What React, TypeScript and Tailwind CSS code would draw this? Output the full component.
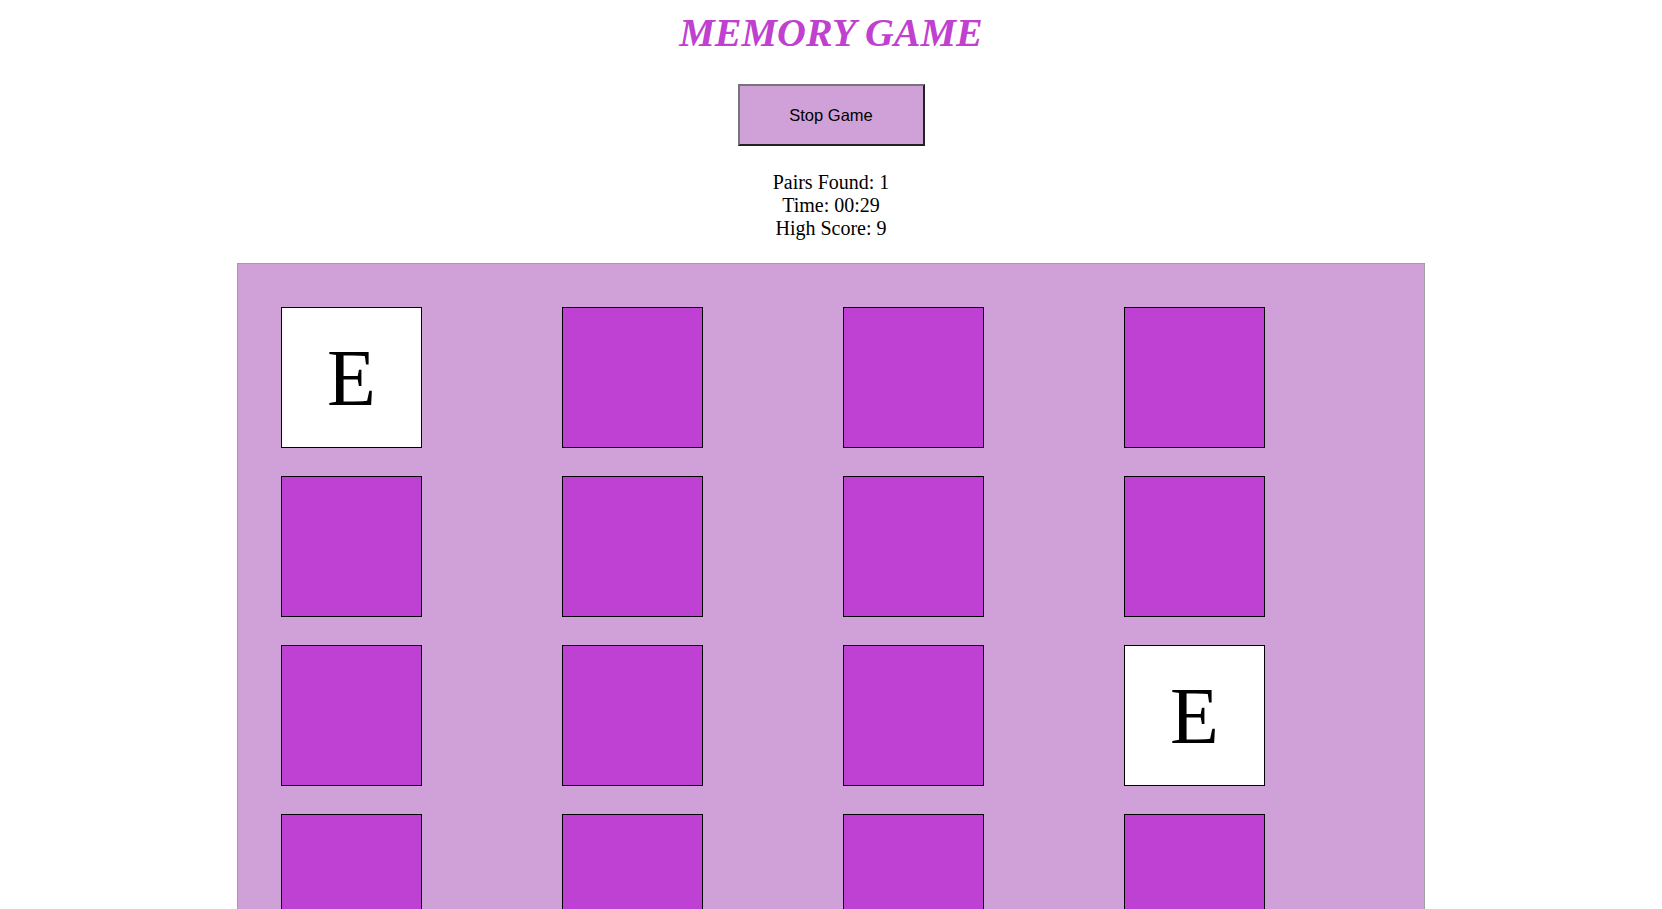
const cards = [
  'E', '', '', '',
  '', '', '', '',
  '', '', '', 'E',
  '', '', '', '',
];

export default function App() {
  return (
    <div className="h-[909px] bg-white flex flex-col items-center overflow-hidden">
      <h1 className="shrink-0 mt-[10px] text-[40px] leading-[46px] font-bold italic text-[#C040D0] font-['Liberation_Serif',serif]">
        MEMORY GAME
      </h1>
      <button className="shrink-0 mt-[28px] w-[187px] h-[62px] bg-[#D0A0D8] border-2 border-t-[#767676] border-l-[#767676] border-r-[#222] border-b-[#222] text-[16.5px] text-black font-['Liberation_Sans',sans-serif]">
        Stop Game
      </button>
      <div className="shrink-0 mt-[25px] text-center text-[20px] leading-[23px] text-black font-['Liberation_Serif',serif]">
        <div>Pairs Found: 1</div>
        <div>Time: 00:29</div>
        <div>High Score: 9</div>
      </div>
      <div className="mt-[23px] w-[1188px] shrink-0 bg-[#D0A0D8] border border-[#A0A0A0] pt-[43px] pl-[43px] pb-[40px]">
        <div className="grid grid-cols-[repeat(4,141px)] gap-x-[140px] gap-y-[28px]">
          {cards.map((c, i) => (
            <div
              key={i}
              className={`w-[141px] h-[141px] border border-black flex items-center justify-center text-[80px] leading-none text-black font-['Liberation_Serif',serif] ${c ? 'bg-white' : 'bg-[#BF41D3]'}`}
            >
              {c}
            </div>
          ))}
        </div>
      </div>
    </div>
  );
}
